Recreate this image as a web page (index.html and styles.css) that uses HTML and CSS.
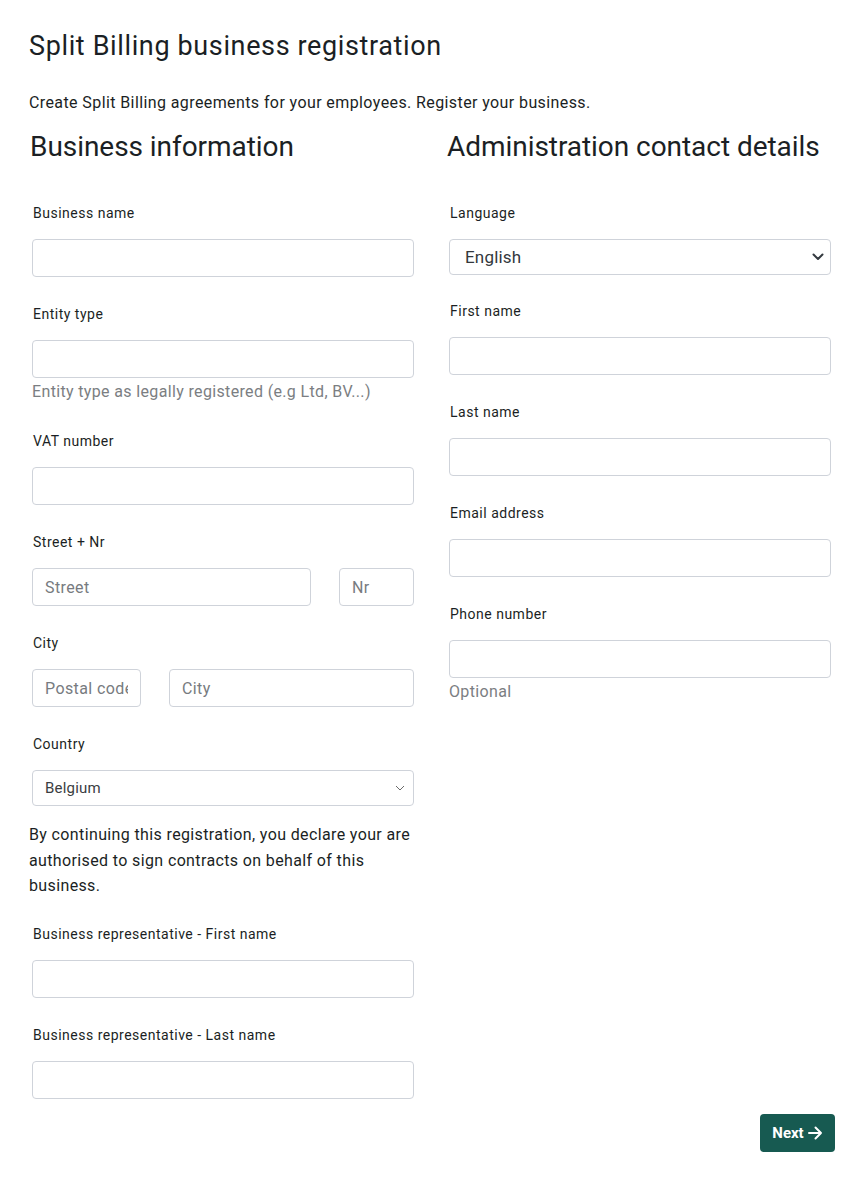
FILE: index.html
```html
<!DOCTYPE html>
<html lang="en">
<head>
<meta charset="utf-8">
<title>Split Billing business registration</title>
<link rel="stylesheet" href="styles.css">
</head>
<body>
<main class="page">
  <h1 class="title">Split Billing business registration</h1>
  <p class="intro">Create Split Billing agreements for your employees. Register your business.</p>
  <div class="columns">
    <section class="col">
      <h2 class="section-title">Business information</h2>
      <div class="fields">
        <div class="field">
          <label class="label">Business name</label>
          <input class="input" type="text">
        </div>
        <div class="field">
          <label class="label">Entity type</label>
          <input class="input" type="text">
          <div class="help">Entity type as legally registered (e.g Ltd, BV...)</div>
        </div>
        <div class="field">
          <label class="label">VAT number</label>
          <input class="input" type="text">
        </div>
        <div class="field">
          <label class="label">Street + Nr</label>
          <div class="row street-row">
            <input class="input" type="text" placeholder="Street">
            <input class="input" type="text" placeholder="Nr">
          </div>
        </div>
        <div class="field">
          <label class="label">City</label>
          <div class="row city-row">
            <input class="input" type="text" placeholder="Postal code">
            <input class="input" type="text" placeholder="City">
          </div>
        </div>
        <div class="field field-select">
          <label class="label">Country</label>
          <div class="select select-thin">
            <span>Belgium</span>
            <svg class="chev-thin" width="10" height="6" viewBox="0 0 10 6"><path d="M1 1l4 4 4-4" fill="none" stroke="#6b6b6b" stroke-width="1"/></svg>
          </div>
        </div>
        <p class="declare">By continuing this registration, you declare your are authorised to sign contracts on behalf of this business.</p>
        <div class="field">
          <label class="label">Business representative - First name</label>
          <input class="input" type="text">
        </div>
        <div class="field">
          <label class="label">Business representative - Last name</label>
          <input class="input" type="text">
        </div>
      </div>
    </section>
    <section class="col">
      <h2 class="section-title">Administration contact details</h2>
      <div class="fields">
        <div class="field field-lang">
          <label class="label">Language</label>
          <div class="select select-bold">
            <span>English</span>
            <svg class="chev-bold" width="12" height="8" viewBox="0 0 12 8"><path d="M1.5 1.5L6 6l4.5-4.5" fill="none" stroke="#343a40" stroke-width="2" stroke-linecap="round" stroke-linejoin="round"/></svg>
          </div>
        </div>
        <div class="field">
          <label class="label">First name</label>
          <input class="input" type="text">
        </div>
        <div class="field">
          <label class="label">Last name</label>
          <input class="input" type="text">
        </div>
        <div class="field">
          <label class="label">Email address</label>
          <input class="input" type="text">
        </div>
        <div class="field">
          <label class="label">Phone number</label>
          <input class="input" type="text">
          <div class="help">Optional</div>
        </div>
      </div>
    </section>
  </div>
  <div class="actions">
    <button class="btn-next" type="button">Next
      <svg width="15" height="14" viewBox="0 0 15 14"><path d="M1 7h12M7.5 1.5L13 7l-5.5 5.5" fill="none" stroke="#fff" stroke-width="2" stroke-linecap="round" stroke-linejoin="round"/></svg>
    </button>
  </div>
</main>
</body>
</html>
```
FILE: styles.css
```css
* { box-sizing: border-box; }
body {
  margin: 0;
  background: #fff;
  color: #1d1d1f;
  font-family: Roboto, "Liberation Sans", sans-serif;
}
.page {
  padding: 30px 29px 0 29px;
}
.title {
  margin: 0;
  font-size: 27px;
  font-weight: 400;
  line-height: 32px;
  letter-spacing: 0.63px;
  color: #1b1f24;
}
.intro {
  margin: 29px 0 0 0;
  font-size: 16px;
  line-height: 24px;
  letter-spacing: 0.4px;
  color: #1b1f24;
}
.columns {
  display: grid;
  grid-template-columns: 388px 388px;
  column-gap: 29px;
  margin-top: 14px;
}
.section-title {
  margin: 0 0 38px 1px;
  font-size: 28px;
  font-weight: 400;
  line-height: 36px;
  letter-spacing: -0.05px;
  white-space: nowrap;
  color: #1b1f24;
}
.fields {
  padding: 0 3px;
}
.field {
  margin-bottom: 27px;
}
.label {
  display: block;
  font-size: 14px;
  line-height: 20px;
  letter-spacing: 0.5px;
  margin: 0 0 16px 1px;
  color: #1b1f24;
}
.input {
  display: block;
  width: 100%;
  height: 38px;
  border: 1px solid #cfd3da;
  border-radius: 4px;
  padding: 0 12px;
  font-family: inherit;
  font-size: 16px;
  letter-spacing: 0.4px;
  color: #333;
  background: #fff;
  outline: none;
}
.input::placeholder {
  color: #777b80;
}
.help {
  margin-top: 2px;
  font-size: 16px;
  line-height: 24px;
  letter-spacing: 0.35px;
  color: #7b7e82;
}
.row {
  display: grid;
  column-gap: 28px;
  margin-top: 1px;
}
.street-row { grid-template-columns: 279px 1fr; }
.city-row { grid-template-columns: 109px 1fr; }
.select {
  display: flex;
  align-items: center;
  justify-content: space-between;
  height: 36px;
  border: 1px solid #cfd3da;
  border-radius: 4px;
  background: #fff;
}
.select-thin {
  padding: 0 8px 0 12px;
  font-size: 15px;
  letter-spacing: 0.2px;
  color: #3a3d42;
}
.select-bold {
  padding: 0 6px 0 15px;
  font-size: 17px;
  letter-spacing: 0.2px;
  color: #33373c;
}
.field-select { margin-bottom: 16px; }
.field-lang { margin-bottom: 26px; }
.declare {
  margin: 0 0 25px -3px;
  font-size: 16px;
  line-height: 25.5px;
  letter-spacing: 0.37px;
  color: #1b1f24;
}
.actions {
  display: flex;
  justify-content: flex-end;
  margin-top: -12px;
}
.btn-next {
  display: flex;
  align-items: center;
  gap: 4px;
  height: 38px;
  width: 75px;
  margin-right: -1px;
  justify-content: center;
  border: none;
  border-radius: 4px;
  background: #175a51;
  color: #fff;
  font-family: inherit;
  font-size: 15px;
  font-weight: 700;
}
```
